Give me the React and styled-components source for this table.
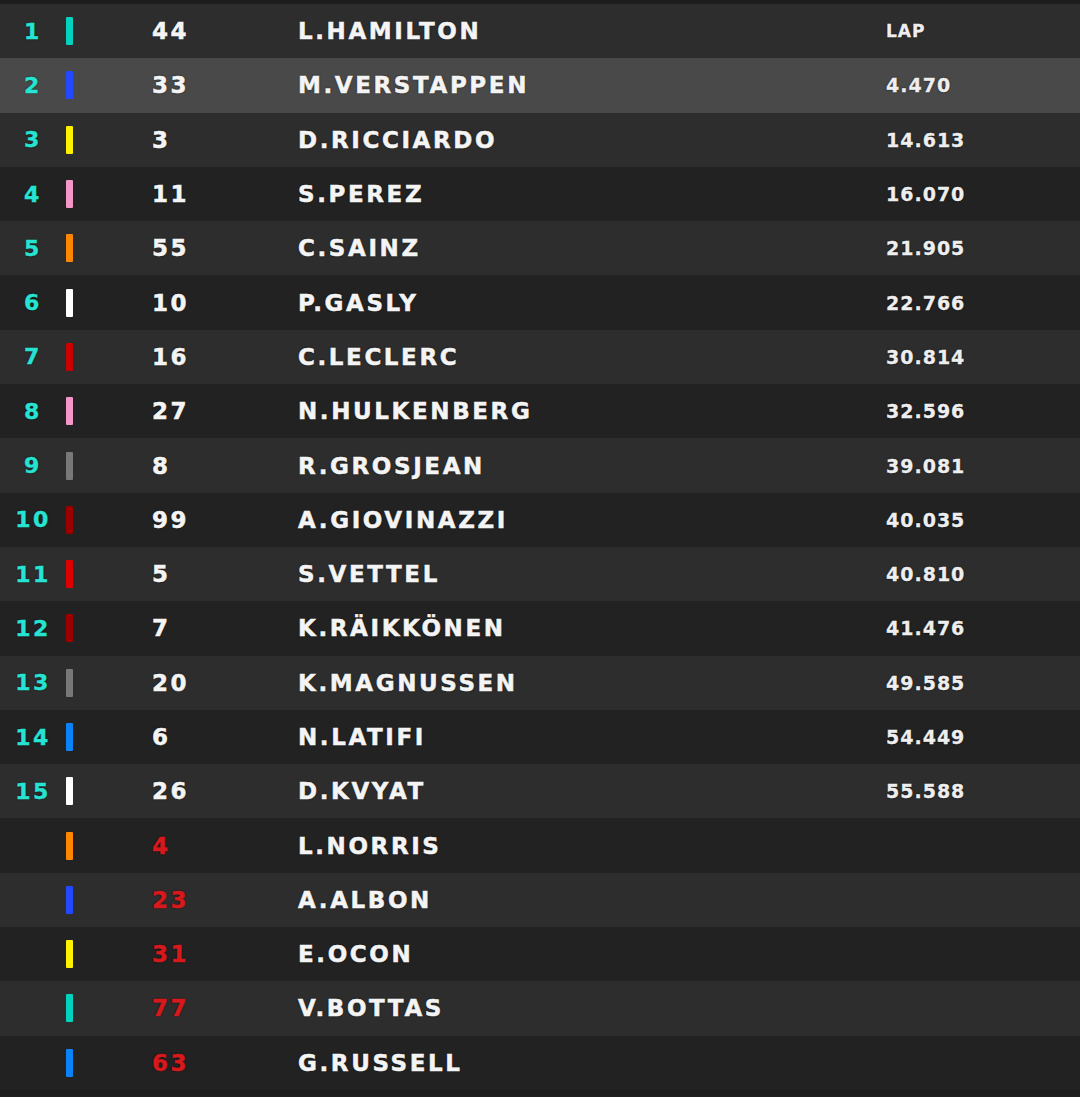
import React from 'react';
import styled, { createGlobalStyle } from 'styled-components';

const GlobalStyle = createGlobalStyle`
    html, body {
        margin: 0;
        padding: 0;
        background: #1d1d1d;
    }
`;

const Board = styled.div`
    width: 1080px;
    height: 1097px;
    padding-top: 4px;
    box-sizing: border-box;
    background: #1d1d1d;
    font-family: 'DejaVu Sans', 'Liberation Sans', sans-serif;
    font-weight: bold;
    overflow: hidden;
`;

const Row = styled.div`
    display: grid;
    grid-template-columns: 64px 88px 146px 588px 1fr;
    align-items: center;
    height: 54.3px;
    background: ${p => p.$active ? '#494949' : p.$odd ? '#2d2d2d' : '#222222'};
    color: #f4f4f4;
    text-shadow: 0 0 2px rgba(0, 0, 0, 0.9);
`;

const Pos = styled.div`
    text-align: center;
    color: #26e3d3;
    font-size: 22px;
    letter-spacing: 2.5px;
    padding-left: 2px;
    -webkit-text-stroke: 0.4px currentColor;
`;

const TeamBar = styled.div`
    width: 7px;
    height: 28px;
    margin-left: 2px;
    border-radius: 1px;
    background: ${p => p.$color};
`;

const Num = styled.div`
    font-size: 23px;
    letter-spacing: 2.4px;
    -webkit-text-stroke: 0.5px currentColor;
    color: ${p => p.$out ? '#d5191c' : '#f4f4f4'};
`;

const Name = styled.div`
    font-size: 23px;
    letter-spacing: 2.6px;
    -webkit-text-stroke: 0.5px currentColor;
`;

const Gap = styled.div`
    font-size: ${p => p.$small ? '17px' : '19px'};
    letter-spacing: 1px;
    color: #eeeeee;
    -webkit-text-stroke: 0.3px currentColor;
`;

const drivers = [
    { pos: 1, team: '#00d2be', num: 44, name: 'L.HAMILTON', gap: 'LAP' },
    { pos: 2, team: '#2448ff', num: 33, name: 'M.VERSTAPPEN', gap: '4.470' },
    { pos: 3, team: '#fff200', num: 3, name: 'D.RICCIARDO', gap: '14.613' },
    { pos: 4, team: '#f596c8', num: 11, name: 'S.PEREZ', gap: '16.070' },
    { pos: 5, team: '#ff8700', num: 55, name: 'C.SAINZ', gap: '21.905' },
    { pos: 6, team: '#ffffff', num: 10, name: 'P.GASLY', gap: '22.766' },
    { pos: 7, team: '#c80000', num: 16, name: 'C.LECLERC', gap: '30.814' },
    { pos: 8, team: '#f596c8', num: 27, name: 'N.HULKENBERG', gap: '32.596' },
    { pos: 9, team: '#787878', num: 8, name: 'R.GROSJEAN', gap: '39.081' },
    { pos: 10, team: '#9b0000', num: 99, name: 'A.GIOVINAZZI', gap: '40.035' },
    { pos: 11, team: '#dc0000', num: 5, name: 'S.VETTEL', gap: '40.810' },
    { pos: 12, team: '#9b0000', num: 7, name: 'K.RÄIKKÖNEN', gap: '41.476' },
    { pos: 13, team: '#787878', num: 20, name: 'K.MAGNUSSEN', gap: '49.585' },
    { pos: 14, team: '#0a82fa', num: 6, name: 'N.LATIFI', gap: '54.449' },
    { pos: 15, team: '#ffffff', num: 26, name: 'D.KVYAT', gap: '55.588' },
    { team: '#ff8700', num: 4, name: 'L.NORRIS', out: true },
    { team: '#2448ff', num: 23, name: 'A.ALBON', out: true },
    { team: '#fff200', num: 31, name: 'E.OCON', out: true },
    { team: '#00d2be', num: 77, name: 'V.BOTTAS', out: true },
    { team: '#0a82fa', num: 63, name: 'G.RUSSELL', out: true },
];

const App = () => {
    return (
        <Board>
            <GlobalStyle />
            {drivers.map((d, i) => (
                <Row key={d.name} $odd={i % 2 === 0} $active={i === 1}>
                    <Pos>{d.pos}</Pos>
                    <TeamBar $color={d.team} />
                    <Num $out={d.out}>{d.num}</Num>
                    <Name>{d.name}</Name>
                    <Gap $small={d.gap === 'LAP'}>{d.gap}</Gap>
                </Row>
            ))}
        </Board>
    );
}

export default App;
